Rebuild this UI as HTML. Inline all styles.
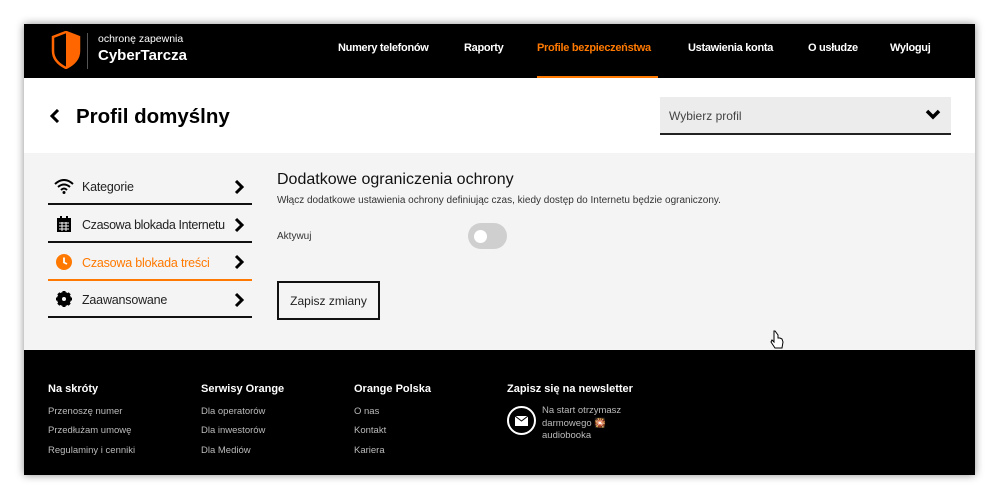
<!DOCTYPE html>
<html><head><meta charset="utf-8"><style>
*{margin:0;padding:0;box-sizing:border-box}
body{width:999px;height:499px;background:#fff;font-family:"Liberation Sans",sans-serif;position:relative;overflow:hidden}
.win{position:absolute;left:24px;top:24px;width:951px;height:451px;box-shadow:0 0 8px rgba(0,0,0,.45);background:#f4f4f4;overflow:hidden}
.hdr{position:absolute;left:0;top:0;width:951px;height:54px;background:#000}
.nav{position:absolute;top:17px;color:#fff;font-weight:bold;font-size:11px;letter-spacing:-.3px}
.top{position:absolute;left:0;top:54px;width:951px;height:75px;background:#fff}
.item{position:absolute;left:24px;width:204px;height:37px;border-bottom:2px solid #111;font-size:12.5px;color:#222;letter-spacing:-.2px}
.item span{position:absolute;left:34px;top:12px}
.ft{position:absolute;left:0;top:326px;width:951px;height:125px;background:#000;color:#fff}
.ft b{position:absolute;top:32px;font-size:11px}
.ft i{position:absolute;font-style:normal;font-size:9.5px;color:#bbb}
</style></head><body>
<div class="win">
<div class="hdr">
<svg style="position:absolute;left:27px;top:7px" width="30" height="38" viewBox="0 0 30 38"><path d="M15 1 L28 6 V20 C28 29 21 34 15 37 C9 34 2 29 2 20 V6 Z" fill="none" stroke="#ff6600" stroke-width="2.5"/><path d="M15 1 L28 6 V20 C28 29 21 34 15 37 Z" fill="#ff6600"/></svg>
<div style="position:absolute;left:63px;top:9px;width:1px;height:36px;background:#555"></div>
<div style="position:absolute;left:74px;top:9px;color:#fff;font-size:10.5px">ochronę zapewnia</div>
<div style="position:absolute;left:74px;top:23px;color:#fff;font-size:15px;font-weight:bold">CyberTarcza</div>
<div class="nav" style="left:314px;top:18px">Numery telefonów</div>
<div class="nav" style="left:440px;top:18px">Raporty</div>
<div class="nav" style="left:513px;top:18px;color:#ff7900">Profile bezpieczeństwa</div>
<div style="position:absolute;left:513px;top:52px;width:121px;height:2px;background:#ff7900"></div>
<div class="nav" style="left:664px;top:18px">Ustawienia konta</div>
<div class="nav" style="left:784px;top:18px">O usłudze</div>
<div class="nav" style="left:866px;top:18px">Wyloguj</div>
</div>
<div class="top">
<svg style="position:absolute;left:25px;top:31px" width="12" height="14" viewBox="0 0 12 14"><path d="M9 1 L3 7 L9 13" fill="none" stroke="#000" stroke-width="3"/></svg>
<div style="position:absolute;left:52px;top:27px;font-size:20.5px;font-weight:bold;color:#000">Profil domyślny</div>
<div style="position:absolute;left:636px;top:19px;width:291px;height:38px;background:#ececec;border-bottom:2px solid #222">
<span style="position:absolute;left:9px;top:12px;font-size:12px;color:#444">Wybierz profil</span>
<svg style="position:absolute;left:265px;top:12px" width="16" height="12" viewBox="0 0 16 12"><path d="M2 2 L8 8 L14 2" fill="none" stroke="#000" stroke-width="3.5"/></svg>
</div>
</div>
<div class="item" style="top:144px"><svg style="position:absolute;left:6px;top:11px" width="20" height="15" viewBox="0 0 20 15"><path d="M1 5 Q10 -3 19 5 M4 8 Q10 3 16 8 M7 11 Q10 8 13 11" fill="none" stroke="#000" stroke-width="2"/><circle cx="10" cy="13.5" r="1.5"/></svg><span>Kategorie</span></div>
<div class="item" style="top:182px"><svg style="position:absolute;left:9px;top:10px" width="14" height="16" viewBox="0 0 14 16"><rect x="0" y="2" width="14" height="14" fill="#000"/><rect x="3" y="0" width="2" height="4" fill="#000"/><rect x="9" y="0" width="2" height="4" fill="#000"/><path d="M2 7h10M2 10h10M2 13h10M5 6v9M9 6v9" stroke="#f4f4f4" stroke-width="1"/></svg><span style="letter-spacing:-.35px">Czasowa blokada Internetu</span></div>
<div class="item" style="top:220px;border-color:#ff7900;color:#ff7900"><svg style="position:absolute;left:8px;top:10px" width="16" height="16" viewBox="0 0 16 16"><circle cx="8" cy="8" r="8" fill="#ff7900"/><path d="M8 3.5V8.5L11 10" fill="none" stroke="#fff" stroke-width="1.8"/></svg><span>Czasowa blokada treści</span></div>
<div class="item" style="top:257px"><svg style="position:absolute;left:8px;top:10px" width="16" height="16" viewBox="0 0 16 16"><circle cx="8" cy="8" r="5.5" fill="none" stroke="#000" stroke-width="3"/><path d="M8 0v16M0 8h16M2.3 2.3l11.4 11.4M13.7 2.3L2.3 13.7" stroke="#000" stroke-width="3"/><circle cx="8" cy="8" r="2" fill="#f4f4f4"/></svg><span>Zaawansowane</span></div>
<svg style="position:absolute;left:209px;top:156px" width="12" height="140" viewBox="0 0 12 140"><g fill="none" stroke="#000" stroke-width="3"><path d="M3 1l6 6-6 6"/><path d="M3 39l6 6-6 6"/><path d="M3 76l6 6-6 6"/><path d="M3 114l6 6-6 6"/></g></svg>
<div style="position:absolute;left:253px;top:147px;font-size:16px;color:#111">Dodatkowe ograniczenia ochrony</div>
<div style="position:absolute;left:253px;top:171px;font-size:10px;color:#333">Włącz dodatkowe ustawienia ochrony definiując czas, kiedy dostęp do Internetu będzie ograniczony.</div>
<div style="position:absolute;left:253px;top:207px;font-size:10px;color:#333">Aktywuj</div>
<div style="position:absolute;left:444px;top:199px;width:39px;height:26px;border-radius:13px;background:#cfcfcf"><div style="position:absolute;left:6px;top:7px;width:13px;height:13px;border-radius:50%;background:#fff"></div></div>
<div style="position:absolute;left:253px;top:257px;width:103px;height:39px;border:2px solid #111;font-size:12px;color:#222;text-align:center;line-height:36px">Zapisz zmiany</div>
<svg style="position:absolute;left:746px;top:306px" width="14" height="20" viewBox="0 0 14 20"><path d="M4 1v11l-2-2-1 2 4 6h7l1-6-1-3-2-1-2 0V5L5 1Z" fill="#fff" stroke="#000" stroke-width="1"/></svg>
<div class="ft">
<b style="left:24px;top:33px">Na skróty</b><b style="left:177px;top:33px">Serwisy Orange</b><b style="left:330px;top:33px">Orange Polska</b><b style="left:483px;top:33px">Zapisz się na newsletter</b>
<i style="left:24px;top:56px">Przenoszę numer</i><i style="left:24px;top:75px">Przedłużam umowę</i><i style="left:24px;top:95px">Regulaminy i cenniki</i>
<i style="left:177px;top:56px">Dla operatorów</i><i style="left:177px;top:75px">Dla inwestorów</i><i style="left:177px;top:95px">Dla Mediów</i>
<i style="left:330px;top:56px">O nas</i><i style="left:330px;top:75px">Kontakt</i><i style="left:330px;top:95px">Kariera</i>
<div style="position:absolute;left:483px;top:56px;width:29px;height:29px;border:2px solid #fff;border-radius:50%"><svg style="position:absolute;left:6px;top:8px" width="13" height="10" viewBox="0 0 13 10"><rect width="13" height="10" fill="#fff"/><path d="M0 0l6.5 5L13 0" fill="none" stroke="#000" stroke-width="1"/></svg></div>
<i style="left:518px;top:55px;line-height:12.5px">Na start otrzymasz<br>darmowego 🎇<br>audiobooka</i>
</div>
</div>
</body></html>
